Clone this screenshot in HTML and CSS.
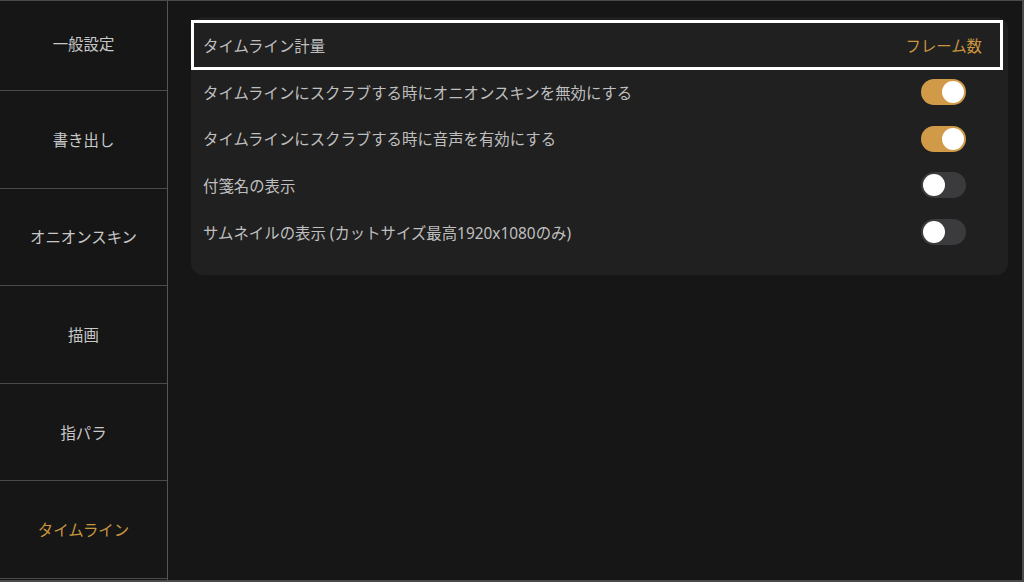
FILE: index.html
```html
<!DOCTYPE html>
<html lang="ja">
<head>
    <meta charset="UTF-8">
    <meta name="viewport" content="width=device-width, initial-scale=1.0">
    <title>設定</title>
    <link rel="stylesheet" href="styles.css">
</head>
<body>
    <div class="app">
        <nav class="sidebar">
            <div class="nav-item first">一般設定</div>
            <div class="nav-item">書き出し</div>
            <div class="nav-item">オニオンスキン</div>
            <div class="nav-item">描画</div>
            <div class="nav-item">指パラ</div>
            <div class="nav-item active">タイムライン</div>
        </nav>
        <main class="content">
            <div class="panel">
                <div class="row selected">
                    <span>タイムライン計量</span>
                    <span class="value">フレーム数</span>
                </div>
                <div class="row">
                    <span>タイムラインにスクラブする時にオニオンスキンを無効にする</span>
                    <span class="toggle on"></span>
                </div>
                <div class="row">
                    <span>タイムラインにスクラブする時に音声を有効にする</span>
                    <span class="toggle on"></span>
                </div>
                <div class="row">
                    <span>付箋名の表示</span>
                    <span class="toggle"></span>
                </div>
                <div class="row">
                    <span>サムネイルの表示 (カットサイズ最高1920x1080のみ)</span>
                    <span class="toggle"></span>
                </div>
            </div>
        </main>
    </div>
</body>
</html>
```
FILE: styles.css
```css
html, body {
    margin: 0;
    background-color: #161616;
}
body {
    font-family: "Noto Sans", "Noto Sans CJK JP", sans-serif;
    color: #c4c4c4;
}
.app {
    display: flex;
    width: 1024px;
    height: 582px;
    box-sizing: border-box;
    border-top: 1px solid #4a4a4a;
    border-right: 2px solid #4a4a4a;
    border-bottom: 2px solid #4a4a4a;
}
.sidebar {
    width: 167px;
    flex-shrink: 0;
    border-right: 1px solid #555;
    display: flex;
    flex-direction: column;
}
.nav-item {
    height: 96.6px;
    flex-shrink: 0;
    border-bottom: 1px solid #4a4a4a;
    display: flex;
    align-items: center;
    justify-content: center;
    font-size: 15.4px;
    color: #c8c8c8;
}
.nav-item.first {
    height: 90px;
    padding-bottom: 5px;
    box-sizing: border-box;
}
.nav-item.active {
    color: #c9963f;
}
.content {
    flex: 1;
    padding: 16px 0 0 23px;
}
.panel {
    width: 817px;
    height: 258px;
    box-sizing: border-box;
    background-color: #202020;
    border-radius: 12px;
    padding: 3px 5px 0 0;
}
.row {
    height: 46.6px;
    box-sizing: border-box;
    display: flex;
    align-items: center;
    justify-content: space-between;
    padding: 0 37px 2px 12px;
    font-size: 15.4px;
    color: #bfbfbf;
}
.row.selected {
    height: 50px;
    border: 3px solid #fff;
    padding: 0 18px 0 9px;
}
.value {
    color: #c9963f;
}
.toggle {
    position: relative;
    width: 45px;
    height: 26px;
    border-radius: 13px;
    background-color: #3b3b3d;
}
.toggle::after {
    content: "";
    position: absolute;
    top: 2px;
    left: 2px;
    width: 22px;
    height: 22px;
    border-radius: 50%;
    background-color: #fff;
}
.toggle.on {
    background-color: #d09a48;
}
.toggle.on::after {
    left: 21px;
}
```
